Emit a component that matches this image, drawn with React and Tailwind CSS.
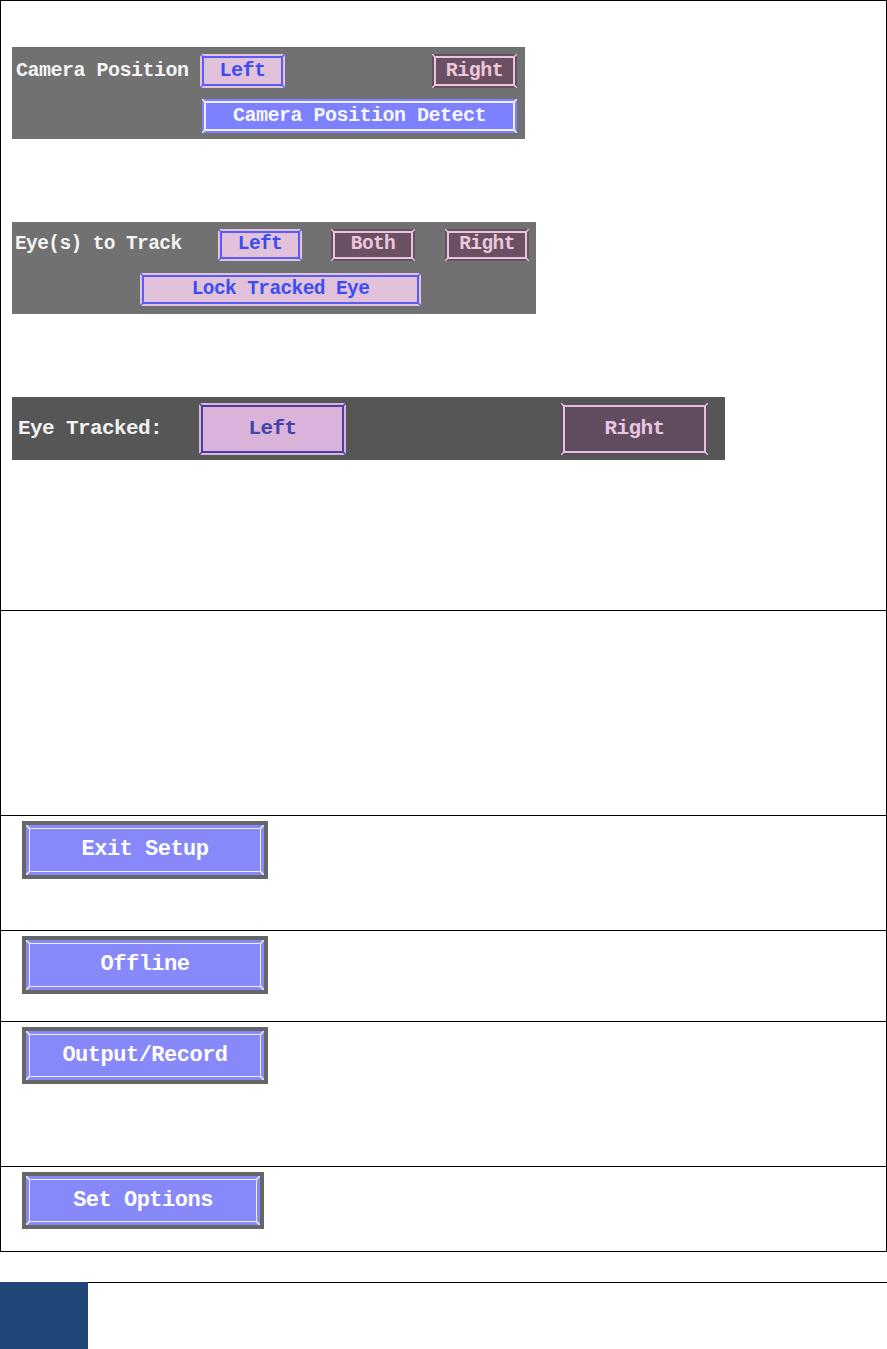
import React from "react";

function Corners({ color, size = 4 }) {
  const s = size;
  return (
    <>
      <svg className="absolute top-0 left-0" width={s} height={s}>
        <line x1="0" y1="0" x2={s} y2={s} stroke={color} strokeWidth="1.5" />
      </svg>
      <svg className="absolute top-0 right-0" width={s} height={s}>
        <line x1={s} y1="0" x2="0" y2={s} stroke={color} strokeWidth="1.5" />
      </svg>
      <svg className="absolute bottom-0 left-0" width={s} height={s}>
        <line x1="0" y1={s} x2={s} y2="0" stroke={color} strokeWidth="1.5" />
      </svg>
      <svg className="absolute bottom-0 right-0" width={s} height={s}>
        <line x1={s} y1={s} x2="0" y2="0" stroke={color} strokeWidth="1.5" />
      </svg>
    </>
  );
}

function SmallBtn({ className, lineClass, lineColor, children }) {
  return (
    <div className={"relative flex items-center justify-center shrink-0 " + className}>
      <div className={"absolute inset-[2px] border-2 " + lineClass}></div>
      <Corners color={lineColor} size={3} />
      <span className="relative">{children}</span>
    </div>
  );
}

function BigBtn({ className, children }) {
  return (
    <div className={"bg-[#666666] p-[4px] " + className}>
      <div className="relative h-full bg-[#8789fb] flex items-center justify-center">
        <div className="absolute inset-[3px] border-[1.5px] border-[#eeeeff]"></div>
        <Corners color="#eeeeff" size={4} />
        <span className="relative text-white font-bold text-[22px] leading-none tracking-[-0.5px]">
          {children}
        </span>
      </div>
    </div>
  );
}

const pinkBtn = "bg-[#e2c2da] text-[#3b4df2]";
const pinkLine = "border-[#5a5cf6]";
const mauveBtn = "bg-[#6a5062] text-[#ecc6dc]";
const mauveLine = "border-[#e6c4da]";

export default function App() {
  return (
    <div className="w-[887px] h-[1349px] bg-white font-['Liberation_Mono','DejaVu_Sans_Mono',monospace] relative">
      <div className="border border-black">
        {/* Row 1 */}
        <div className="h-[609px] pt-[46px] pl-[11px] flex flex-col">
          {/* Panel 1 */}
          <div className="w-[513px] h-[92px] bg-[#717171] pt-[7px] pl-[4px] font-bold text-[20px] tracking-[-0.5px] leading-none">
            <div className="flex items-center h-[34px]">
              <div className="w-[184px] text-[#f4f4f4]">Camera Position</div>
              <SmallBtn className={"w-[85px] h-[34px] " + pinkBtn} lineClass={pinkLine} lineColor="#5a5cf6">
                Left
              </SmallBtn>
              <div className="w-[147px]"></div>
              <SmallBtn className={"w-[85px] h-[34px] " + mauveBtn} lineClass={mauveLine} lineColor="#e6c4da">
                Right
              </SmallBtn>
            </div>
            <div className="mt-[11px] ml-[186px]">
              <SmallBtn
                className="w-[315px] h-[34px] bg-[#7d80ff] text-[#f6f6ff]"
                lineClass="border-[#eeeeff]"
                lineColor="#eeeeff"
              >
                Camera Position Detect
              </SmallBtn>
            </div>
          </div>

          {/* Panel 2 */}
          <div className="mt-[83px] w-[524px] h-[92px] bg-[#717171] pt-[7px] pl-[3px] font-bold text-[19.5px] tracking-[-0.6px] leading-none">
            <div className="flex items-center h-[32px]">
              <div className="w-[203px] text-[#f4f4f4]">Eye(s) to Track</div>
              <SmallBtn className={"w-[84px] h-[32px] " + pinkBtn} lineClass={pinkLine} lineColor="#5a5cf6">
                Left
              </SmallBtn>
              <div className="w-[29px]"></div>
              <SmallBtn className={"w-[84px] h-[32px] " + mauveBtn} lineClass={mauveLine} lineColor="#e6c4da">
                Both
              </SmallBtn>
              <div className="w-[30px]"></div>
              <SmallBtn className={"w-[84px] h-[32px] " + mauveBtn} lineClass={mauveLine} lineColor="#e6c4da">
                Right
              </SmallBtn>
            </div>
            <div className="mt-[12px] ml-[125px]">
              <SmallBtn className={"w-[281px] h-[33px] " + pinkBtn} lineClass={pinkLine} lineColor="#5a5cf6">
                Lock Tracked Eye
              </SmallBtn>
            </div>
          </div>

          {/* Panel 3 */}
          <div className="mt-[83px] w-[713px] h-[63px] bg-[#565656] pl-[6px] flex items-center font-bold text-[21px] tracking-[-0.6px] leading-none">
            <div className="w-[181px] text-[#f2f2f2]">Eye Tracked:</div>
            <SmallBtn
              className="w-[147px] h-[52px] bg-[#d9b3d9] text-[#4342a6]"
              lineClass="border-[#4b3fa0]"
              lineColor="#4b3fa0"
            >
              Left
            </SmallBtn>
            <div className="w-[215px]"></div>
            <SmallBtn
              className="w-[147px] h-[52px] bg-[#604b60] text-[#e8c6e2]"
              lineClass="border-[#e2c2de]"
              lineColor="#e2c2de"
            >
              Right
            </SmallBtn>
          </div>
        </div>

        {/* Row 2 */}
        <div className="h-[205px] border-t border-black"></div>

        {/* Row 3 */}
        <div className="h-[115px] border-t border-black pt-[5px] pl-[21px]">
          <BigBtn className="w-[246px] h-[58px]">Exit Setup</BigBtn>
        </div>

        {/* Row 4 */}
        <div className="h-[91px] border-t border-black pt-[5px] pl-[21px]">
          <BigBtn className="w-[246px] h-[58px]">Offline</BigBtn>
        </div>

        {/* Row 5 */}
        <div className="h-[145px] border-t border-black pt-[5px] pl-[21px]">
          <BigBtn className="w-[246px] h-[57px]">Output/Record</BigBtn>
        </div>

        {/* Row 6 */}
        <div className="h-[85px] border-t border-black pt-[5px] pl-[21px]">
          <BigBtn className="w-[242px] h-[57px]">Set Options</BigBtn>
        </div>
      </div>

      {/* Footer */}
      <div className="mt-[30px] flex">
        <div className="w-[88px] h-[67px] bg-[#1f4778]"></div>
        <div className="flex-1 border-t border-black"></div>
      </div>
    </div>
  );
}
